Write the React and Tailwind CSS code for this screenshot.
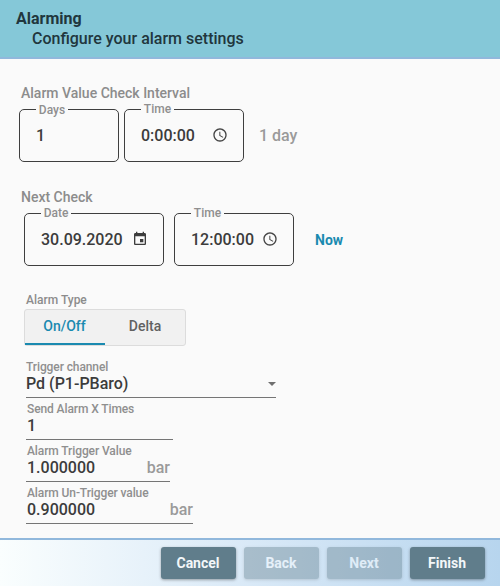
import React from "react";

function Clock() {
  return (
    <svg viewBox="0 0 24 24" fill="currentColor" className="mb-px h-4 w-4 text-[#444]">
      <path d="M11.99 2C6.47 2 2 6.48 2 12s4.47 10 9.99 10C17.52 22 22 17.52 22 12S17.52 2 11.99 2zM12 20c-4.42 0-8-3.58-8-8s3.58-8 8-8 8 3.58 8 8-3.58 8-8 8zm.5-13H11v6l5.25 3.15.75-1.23-4.5-2.67z" />
    </svg>
  );
}

function Calendar() {
  return (
    <svg viewBox="0 0 24 24" fill="currentColor" className="mb-[2px] h-4 w-4 text-[#3c3c3c]">
      <path d="M17 12h-5v5h5v-5zM16 1v2H8V1H6v2H5c-1.11 0-1.99.9-1.99 2L3 19c0 1.1.89 2 2 2h14c1.1 0 2-.9 2-2V5c0-1.1-.9-2-2-2h-1V1h-2zm3 18H5V8h14v11z" />
    </svg>
  );
}

function Outlined({ label, value, icon, width, legend, labelOffset = "mb-[2px]" }) {
  return (
    <fieldset className={`h-[53px] min-w-0 rounded-[5px] border border-[#3f3f3f] ${width}`}>
      <legend className={`flex h-px items-center justify-center whitespace-nowrap text-[12px] text-[#8f8f8f] ${legend}`}>
        <span className={labelOffset}>{label}</span>
      </legend>
      <div className="flex h-[51px] items-center justify-between pl-4 pr-[15px] text-[16px] text-[#3c3c3c]">
        <span>{value}</span>
        {icon}
      </div>
    </fieldset>
  );
}

function Field({ label, value, unit, arrow, width, inset }) {
  return (
    <div className={`flex h-[42px] flex-col border-b border-[#757575] ${width}`}>
      <div className={`mt-1 h-[14px] whitespace-nowrap text-[12px] leading-[14px] tracking-[-0.1px] text-[#8f8f8f] ${inset}`}>
        {label}
      </div>
      <div className={`mt-px flex h-[18px] items-center justify-between text-[16px] leading-[18px] text-[#3c3c3c] ${inset}`}>
        <span>{value}</span>
        {unit && <span className="text-[#9a9a9a]">{unit}</span>}
        {arrow && (
          <svg viewBox="0 0 8 4" className="h-1 w-2">
            <path d="M0 0h8L4 4z" fill="#6f6f6f" />
          </svg>
        )}
      </div>
    </div>
  );
}

function Button({ children, disabled }) {
  return (
    <button
      className={`h-8 w-[75px] rounded-[3px] pr-px text-[14px] font-bold shadow-[0_1px_3px_rgba(0,0,0,0.35)] ${
        disabled ? "bg-[#607d8b] opacity-40 text-white" : "bg-[#607d8b] text-[#f3f7f9]"
      }`}
    >
      {children}
    </button>
  );
}

export default function App() {
  return (
    <div className="flex h-[586px] w-[500px] flex-col overflow-hidden bg-[#fafafa] font-['Roboto',sans-serif] font-medium">
      <header className="h-[59px] border-b-2 border-[#91b8dc] bg-[#85c8d8] pl-4 pt-[9px] text-[16px] leading-5 text-[#21363d]">
        <div className="font-bold">Alarming</div>
        <div className="pl-4">Configure your alarm settings</div>
      </header>

      <main className="h-[479px] text-[14px]">
        <div className="mt-[26px] h-4 pl-[21px] leading-4 text-[#8c8c8c]">Alarm Value Check Interval</div>
        <div className="mt-2 flex items-center pl-[19px]">
          <Outlined label="Days" value="1" width="w-[100px]" legend="ml-4 w-8" labelOffset="" />
          <div className="ml-[5px]">
            <Outlined label="Time" value="0:00:00" width="w-[120px]" legend="ml-4 w-[33px]" icon={<Clock />} />
          </div>
          <span className="ml-[15px] text-[16px] text-[#9a9a9a]">1 day</span>
        </div>

        <div className="mt-[27px] h-4 pl-[21px] leading-4 text-[#8c8c8c]">Next Check</div>
        <div className="mt-2 flex items-center gap-2.5 pl-6">
          <Outlined label="Date" value="30.09.2020" width="w-[140px]" legend="ml-4 w-[30px]" icon={<Calendar />} />
          <Outlined label="Time" value="12:00:00" width="w-[120px]" legend="ml-4 w-[33px]" icon={<Clock />} />
          <span className="ml-[11px] pt-0.5 text-[14px] font-bold text-[#1a8ab0]">Now</span>
        </div>

        <div className="mt-[27px] h-[14px] pl-[26px] text-[12px] leading-[14px] text-[#8c8c8c]">Alarm Type</div>
        <div className="ml-6 mt-[2px] flex h-[37px] w-[162px] rounded-[3px] border border-[#dcdcdc] bg-[#f1f1f1]">
          <div className="flex w-20 items-center justify-center border-b-2 border-[#1a8ab0] pr-px text-[#1a8ab0]">On/Off</div>
          <div className="flex w-20 items-center justify-center pb-0.5 text-[#616161]">Delta</div>
        </div>

        <div className="ml-[26px] mt-[10px]">
          <Field label="Trigger channel" value="Pd (P1-PBaro)" width="w-[250px]" inset="" arrow />
          <Field label="Send Alarm X Times" value="1" width="w-[147px]" inset="pl-px" />
          <Field label="Alarm Trigger Value" value="1.000000" unit="bar" width="w-[144px]" inset="pl-px" />
          <Field label="Alarm Un-Trigger value" value="0.900000" unit="bar" width="w-[167px]" inset="pl-px" />
        </div>
      </main>

      <footer className="flex h-12 justify-end gap-2 border-t-2 border-[#91b8dc] bg-gradient-to-r from-[#fafefe] via-[#d9e9f7] to-[#b7d5ee] pr-[15px] pt-[7px]">
        <Button>Cancel</Button>
        <Button disabled>Back</Button>
        <Button disabled>Next</Button>
        <Button>Finish</Button>
      </footer>
    </div>
  );
}
